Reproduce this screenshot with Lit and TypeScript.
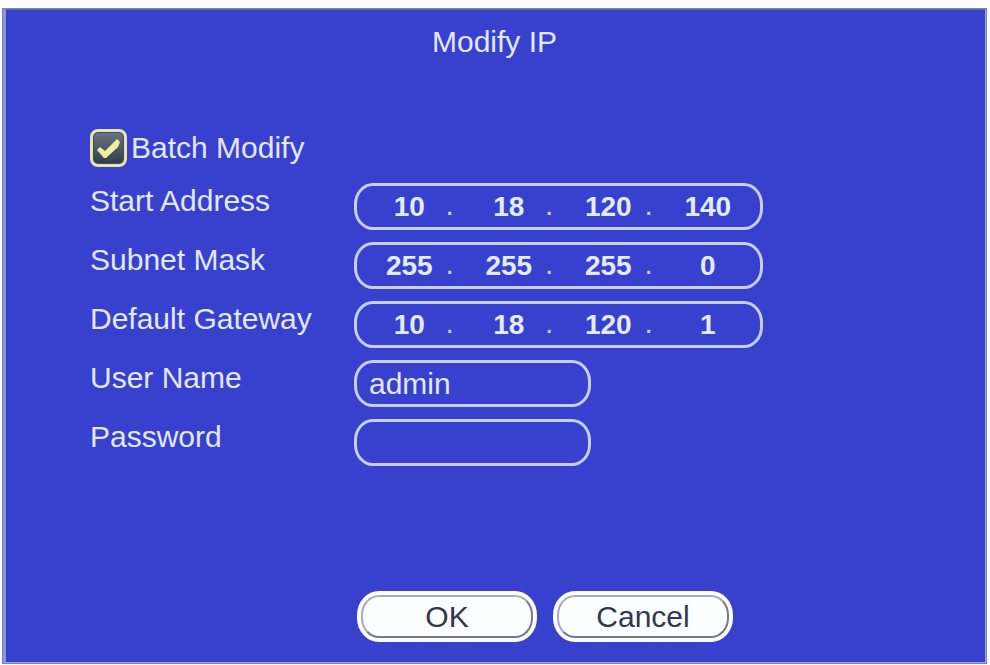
import { LitElement, html, css } from "lit";
import { customElement, property, state } from "lit/decorators.js";

@customElement("ip-field")
class IpField extends LitElement {
  @property() name = "";
  @property({ attribute: false }) parts: string[] = [];

  static styles = css`
    :host {
      display: block;
    }
    .box {
      box-sizing: border-box;
      display: flex;
      align-items: center;
      height: 47px;
      margin: 0;
      padding: 0 16px;
      border: 3px solid #c6d0ff;
      border-radius: 19px / 21px;
    }
    .part {
      box-sizing: border-box;
      flex: 1;
      min-width: 0;
      width: 0;
      height: 36px;
      margin: 0;
      padding: 0;
      border: 0;
      outline: 0;
      background: transparent;
      color: #e2ecff;
      font: bold 28px/36px "Liberation Sans", Arial, sans-serif;
      text-align: center;
    }
    .dot {
      width: 27px;
      padding-bottom: 4px;
      color: #c6d0ff;
      font-size: 30px;
      line-height: 32px;
    }
  `;

  render() {
    return html`
      <div class="box" role="group" aria-label=${this.name}>
        ${this.parts.map(
          (part, i) => html`
            ${i ? html`<span class="dot">.</span>` : null}
            <input class="part" inputmode="numeric" maxlength="3"
              aria-label="${this.name} ${i + 1}" .value=${part} />
          `
        )}
      </div>
    `;
  }
}

@customElement("app-root")
class AppRoot extends LitElement {
  @state() private batch = true;

  private addresses = [
    { name: "Start Address", parts: ["10", "18", "120", "140"] },
    { name: "Subnet Mask", parts: ["255", "255", "255", "0"] },
    { name: "Default Gateway", parts: ["10", "18", "120", "1"] },
  ];

  static styles = css`
    :host {
      display: flex;
      box-sizing: border-box;
      min-height: 100vh;
      padding: 8px 3px 1px 2px;
      background: #fbfdff;
      color: #e2e8ff;
      font: 30px/36px "Liberation Sans", Arial, sans-serif;
    }
    .dialog {
      box-sizing: border-box;
      flex: 1;
      display: flex;
      flex-direction: column;
      padding: 14px 24px 20px 84px;
      background: #3840ce;
      border: 2px solid #98a4f0;
      border-top-color: #5f6cae;
      border-left: 4px solid #8794ee;
      box-shadow: inset 1px 1px 0 #3540a8;
      outline: 1px solid #7685b0;
      outline-offset: -1px;
    }
    .title {
      margin: 0 62px 69px 0;
      font: inherit;
      text-align: center;
    }
    .batch {
      display: flex;
      align-items: center;
      gap: 4px;
      margin-bottom: 16px;
    }
    .tick {
      display: grid;
      width: 37px;
      height: 38px;
    }
    .tick input {
      grid-area: 1 / 1;
      appearance: none;
      box-sizing: border-box;
      width: 37px;
      height: 38px;
      margin: 0;
      border: 3px solid #e6e5ae;
      border-radius: 8px;
      background: linear-gradient(#6a7686, #303b4b);
      box-shadow: inset 0 0 0 1px #454a50;
    }
    .tick svg {
      grid-area: 1 / 1;
      z-index: 1;
      width: 37px;
      height: 38px;
      pointer-events: none;
    }
    .fields {
      display: grid;
      grid-template-columns: 264px minmax(0, 409px);
      row-gap: 12px;
    }
    .label {
      height: 36px;
    }
    .text {
      box-sizing: border-box;
      width: 237px;
      height: 47px;
      margin: 0;
      padding: 0 12px;
      border: 3px solid #c6d0ff;
      border-radius: 19px / 21px;
      outline: 0;
      background: transparent;
      color: inherit;
      font: inherit;
    }
    .actions {
      display: flex;
      gap: 16px;
      margin-top: auto;
      padding-left: 267px;
    }
    .button {
      box-sizing: border-box;
      width: 180px;
      height: 51px;
      padding: 4px;
      border: 0;
      border-radius: 22px / 24px;
      background: #fcfdff;
      color: #33364f;
      font: inherit;
    }
    .face {
      box-sizing: border-box;
      display: block;
      height: 43px;
      border: 2px solid #77788c;
      border-top-color: #aaabb8;
      border-left-color: #a9a6cc;
      border-radius: 18px / 20px;
      line-height: 39px;
    }
  `;

  render() {
    return html`
      <form class="dialog" @submit=${(e: Event) => e.preventDefault()}>
        <h1 class="title">Modify IP</h1>
        <label class="batch">
          <span class="tick">
            <input type="checkbox" .checked=${this.batch}
              @change=${(e: Event) => (this.batch = (e.target as HTMLInputElement).checked)} />
            ${this.batch
              ? html`<svg viewBox="0 0 37 38" aria-hidden="true">
                  <path d="M7 21 L10 18 L15 22 L27 10 L30 13 L28 18 L16 29 L14 29 Z" fill="#f0efa0" />
                </svg>`
              : null}
          </span>
          Batch Modify
        </label>
        <div class="fields">
          ${this.addresses.map(
            (a) => html`
              <span class="label">${a.name}</span>
              <ip-field .name=${a.name} .parts=${a.parts}></ip-field>
            `
          )}
          <label class="label" for="user">User Name</label>
          <input class="text" id="user" type="text" value="admin" autocomplete="off" />
          <label class="label" for="password">Password</label>
          <input class="text" id="password" type="password" autocomplete="off" />
        </div>
        <div class="actions">
          <button class="button" type="submit"><span class="face">OK</span></button>
          <button class="button" type="button"><span class="face">Cancel</span></button>
        </div>
      </form>
    `;
  }
}
